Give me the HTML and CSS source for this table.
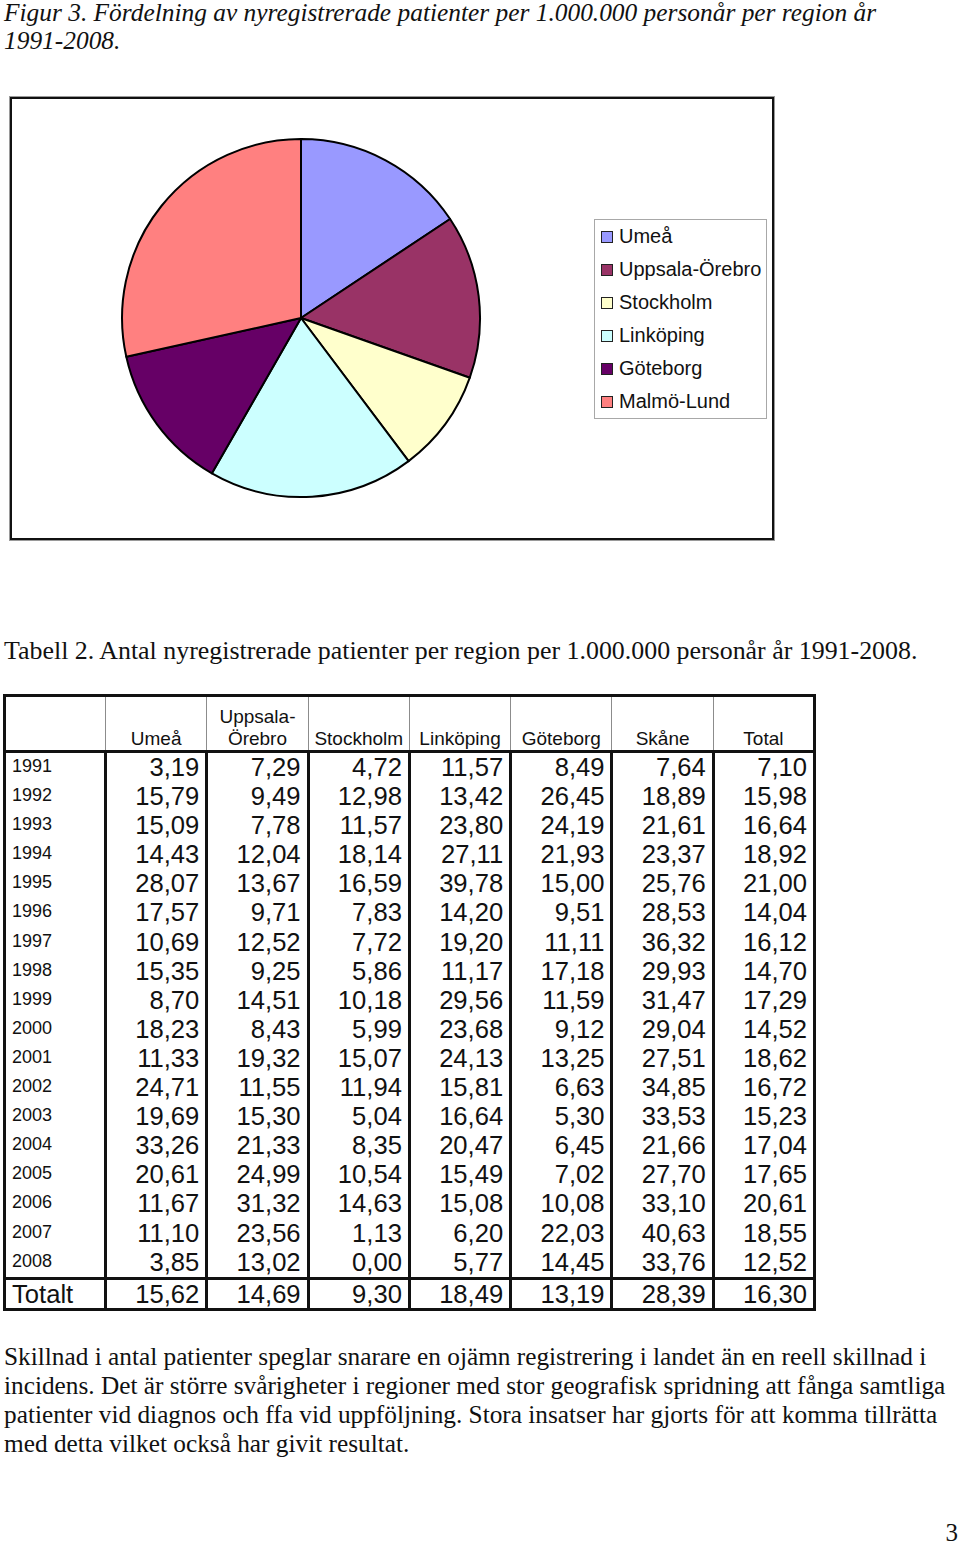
FILE: index.html
```html
<!DOCTYPE html>
<html lang="sv">
<head>
<meta charset="utf-8">
<link rel="stylesheet" href="styles.css">
</head>
<body>
<p class="caption italic">Figur 3. Fördelning av nyregistrerade patienter per 1.000.000 personår per region år<br>1991-2008.</p>

<div class="chart">
  <svg class="pie" width="362" height="362" viewBox="0 0 362 362">
    <g stroke="#000" stroke-width="2" stroke-linejoin="round">
      <path d="M181 181 L181 2 A179 179 0 0 1 330.1 82.0 Z" fill="#9999ff"/>
      <path d="M181 181 L330.1 82.0 A179 179 0 0 1 349.8 240.7 Z" fill="#993366"/>
      <path d="M181 181 L349.8 240.7 A179 179 0 0 1 288.6 324.1 Z" fill="#ffffcc"/>
      <path d="M181 181 L288.6 324.1 A179 179 0 0 1 91.9 336.3 Z" fill="#ccffff"/>
      <path d="M181 181 L91.9 336.3 A179 179 0 0 1 6.3 219.8 Z" fill="#660066"/>
      <path d="M181 181 L6.3 219.8 A179 179 0 0 1 181 2 Z" fill="#ff8080"/>
    </g>
  </svg>
  <ul class="legend">
    <li><span class="sw sw-umea"></span>Umeå</li>
    <li><span class="sw sw-uppsala"></span>Uppsala-Örebro</li>
    <li><span class="sw sw-sthlm"></span>Stockholm</li>
    <li><span class="sw sw-link"></span>Linköping</li>
    <li><span class="sw sw-gbg"></span>Göteborg</li>
    <li><span class="sw sw-malmo"></span>Malmö-Lund</li>
  </ul>
</div>

<p class="caption tabcap">Tabell 2. Antal nyregistrerade patienter per region per 1.000.000 personår år 1991-2008.</p>

<table class="data">
  <colgroup>
    <col class="c1"><col class="cn"><col class="cn"><col class="cn"><col class="cn"><col class="cn"><col class="cn"><col class="cn">
  </colgroup>
  <thead>
    <tr>
      <th class="first"></th>
      <th>Umeå</th>
      <th>Uppsala-<br>Örebro</th>
      <th>Stockholm</th>
      <th>Linköping</th>
      <th>Göteborg</th>
      <th>Skåne</th>
      <th>Total</th>
    </tr>
  </thead>
  <tbody>
    <tr><td class="yr">1991</td><td>3,19</td><td>7,29</td><td>4,72</td><td>11,57</td><td>8,49</td><td>7,64</td><td>7,10</td></tr>
    <tr><td class="yr">1992</td><td>15,79</td><td>9,49</td><td>12,98</td><td>13,42</td><td>26,45</td><td>18,89</td><td>15,98</td></tr>
    <tr><td class="yr">1993</td><td>15,09</td><td>7,78</td><td>11,57</td><td>23,80</td><td>24,19</td><td>21,61</td><td>16,64</td></tr>
    <tr><td class="yr">1994</td><td>14,43</td><td>12,04</td><td>18,14</td><td>27,11</td><td>21,93</td><td>23,37</td><td>18,92</td></tr>
    <tr><td class="yr">1995</td><td>28,07</td><td>13,67</td><td>16,59</td><td>39,78</td><td>15,00</td><td>25,76</td><td>21,00</td></tr>
    <tr><td class="yr">1996</td><td>17,57</td><td>9,71</td><td>7,83</td><td>14,20</td><td>9,51</td><td>28,53</td><td>14,04</td></tr>
    <tr><td class="yr">1997</td><td>10,69</td><td>12,52</td><td>7,72</td><td>19,20</td><td>11,11</td><td>36,32</td><td>16,12</td></tr>
    <tr><td class="yr">1998</td><td>15,35</td><td>9,25</td><td>5,86</td><td>11,17</td><td>17,18</td><td>29,93</td><td>14,70</td></tr>
    <tr><td class="yr">1999</td><td>8,70</td><td>14,51</td><td>10,18</td><td>29,56</td><td>11,59</td><td>31,47</td><td>17,29</td></tr>
    <tr><td class="yr">2000</td><td>18,23</td><td>8,43</td><td>5,99</td><td>23,68</td><td>9,12</td><td>29,04</td><td>14,52</td></tr>
    <tr><td class="yr">2001</td><td>11,33</td><td>19,32</td><td>15,07</td><td>24,13</td><td>13,25</td><td>27,51</td><td>18,62</td></tr>
    <tr><td class="yr">2002</td><td>24,71</td><td>11,55</td><td>11,94</td><td>15,81</td><td>6,63</td><td>34,85</td><td>16,72</td></tr>
    <tr><td class="yr">2003</td><td>19,69</td><td>15,30</td><td>5,04</td><td>16,64</td><td>5,30</td><td>33,53</td><td>15,23</td></tr>
    <tr><td class="yr">2004</td><td>33,26</td><td>21,33</td><td>8,35</td><td>20,47</td><td>6,45</td><td>21,66</td><td>17,04</td></tr>
    <tr><td class="yr">2005</td><td>20,61</td><td>24,99</td><td>10,54</td><td>15,49</td><td>7,02</td><td>27,70</td><td>17,65</td></tr>
    <tr><td class="yr">2006</td><td>11,67</td><td>31,32</td><td>14,63</td><td>15,08</td><td>10,08</td><td>33,10</td><td>20,61</td></tr>
    <tr><td class="yr">2007</td><td>11,10</td><td>23,56</td><td>1,13</td><td>6,20</td><td>22,03</td><td>40,63</td><td>18,55</td></tr>
    <tr><td class="yr">2008</td><td>3,85</td><td>13,02</td><td>0,00</td><td>5,77</td><td>14,45</td><td>33,76</td><td>12,52</td></tr>
  </tbody>
  <tfoot>
    <tr class="tot"><td class="totlabel">Totalt</td><td>15,62</td><td>14,69</td><td>9,30</td><td>18,49</td><td>13,19</td><td>28,39</td><td>16,30</td></tr>
  </tfoot>
</table>

<p class="body-text">Skillnad i antal patienter speglar snarare en ojämn registrering i landet än en reell skillnad i<br>incidens. Det är större svårigheter i regioner med stor geografisk spridning att fånga samtliga<br>patienter vid diagnos och ffa vid uppföljning. Stora insatser har gjorts för att komma tillrätta<br>med detta vilket också har givit resultat.</p>

<p class="pagenum">3</p>
</body>
</html>
```

FILE: styles.css
```css
html, body {
  margin: 0;
  padding: 0;
  background: #fff;
  color: #111;
}

body {
  padding: 0 3px 0 4px;
  font-family: "Liberation Serif", "Times New Roman", serif;
}

p {
  margin: 0;
}

.caption {
  font-size: 25.4px;
  line-height: 28px;
}

.italic {
  font-style: italic;
  margin-top: -2px;
}

.chart {
  margin: 43px 0 0 6px;
  width: 764px;
  height: 443px;
  box-sizing: border-box;
  border: 2px solid #111;
  outline: 1px solid #9a9a9a;
  display: flex;
  align-items: flex-start;
}

.pie {
  display: block;
  margin: 38px 0 0 108px;
}

.legend {
  list-style: none;
  margin: 120px 0 0 112px;
  padding: 0;
  width: 173px;
  box-sizing: border-box;
  border: 1px solid #a8a8a8;
  font-family: "Liberation Sans", Arial, sans-serif;
  font-size: 20px;
  line-height: 33px;
  color: #111;
}

.legend li {
  display: flex;
  align-items: center;
  white-space: nowrap;
}

.sw {
  width: 10px;
  height: 10px;
  border: 1px solid #222;
  margin: 0 6px 0 6px;
  flex: none;
}

.sw-umea { background: #9999ff; }
.sw-uppsala { background: #993366; }
.sw-sthlm { background: #ffffcc; }
.sw-link { background: #ccffff; }
.sw-gbg { background: #660066; }
.sw-malmo { background: #ff8080; }

.tabcap {
  margin-top: 97px;
  font-size: 25.9px;
}

.data {
  margin-top: 29px;
  margin-left: -1px;
  border-collapse: collapse;
  table-layout: fixed;
  width: 810px;
  border: 3px solid #111;
  font-family: "Liberation Sans", Arial, sans-serif;
  color: #111;
}

.c1 { width: 101px; }
.cn { width: 101.3px; }

.data th {
  height: 53px;
  padding: 0;
  vertical-align: bottom;
  text-align: center;
  font-weight: normal;
  font-size: 19px;
  line-height: 22px;
  border-left: 1px solid #8c8c8c;
  border-bottom: 3px solid #111;
}

.data th.first {
  border-left: 3px solid #111;
}

.data td {
  padding: 0 6px 0 0;
  text-align: right;
  vertical-align: top;
  font-size: 25.6px;
  line-height: 29.1px;
  border-left: 3px solid #111;
  white-space: nowrap;
}

.data td.yr {
  text-align: left;
  font-size: 18px;
  line-height: 20px;
  padding: 3px 0 0 6px;
}

.data tr.tot td {
  border-top: 3px solid #111;
  line-height: 28px;
}

.data td.totlabel {
  text-align: left;
  padding-left: 6px;
}

.body-text {
  margin-top: 31px;
  font-size: 25.3px;
  line-height: 29px;
}

.pagenum {
  margin: 61px -1px 0 0;
  text-align: right;
  font-size: 25px;
  line-height: 28px;
}
```
